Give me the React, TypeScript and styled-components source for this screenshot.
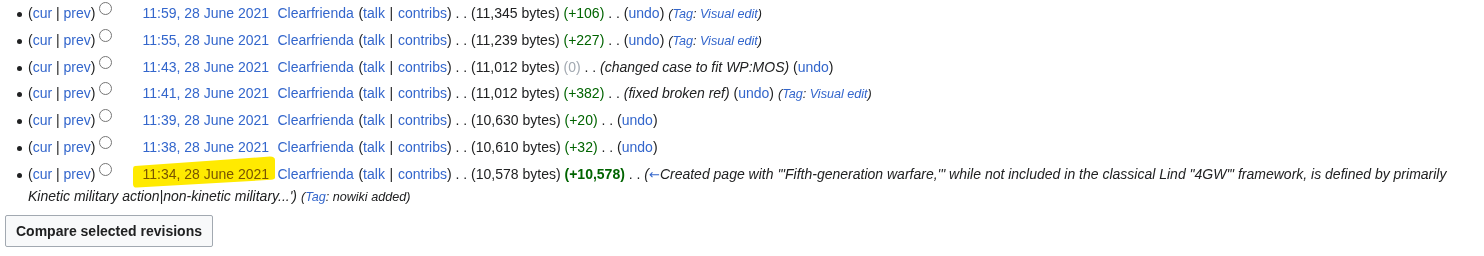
import React from "react";
import styled, { createGlobalStyle } from "styled-components";

const GlobalStyle = createGlobalStyle`
  body {
    margin: 0;
    background: #fff;
    color: #202122;
    font-family: "Liberation Sans", Arial, sans-serif;
  }
`;

const HistoryForm = styled.form`
  padding: 2px 14px 0 5px;
`;

const HistoryList = styled.ul`
  list-style: none;
  margin: 0 0 0 23px;
  padding: 0;
  font-size: 14px;
  line-height: 22px;
`;

const Entry = styled.li`
  position: relative;
  margin-bottom: 4.8px;

  &::before {
    content: "";
    position: absolute;
    left: -11px;
    top: 10px;
    width: 5px;
    height: 5px;
    border-radius: 50%;
    background: #202122;
  }
`;

const WikiLink = styled.a`
  color: #3366cc;
  text-decoration: none;
  cursor: pointer;
`;

const Arrow = styled(WikiLink)`
  font-family: "DejaVu Sans", sans-serif;
  font-style: normal;
  font-size: 13px;
  line-height: 1;
`;

const Radio = styled.input<{ $ghost?: boolean }>`
  appearance: none;
  box-sizing: border-box;
  display: inline-block;
  width: 13px;
  height: 13px;
  margin: 0 ${(p) => (p.$ghost ? "9.5px" : "0")} 0 ${(p) => (p.$ghost ? "7.5px" : "4px")};
  border: 1px solid #767676;
  border-radius: 50%;
  background: #fff;
  vertical-align: top;
  visibility: ${(p) => (p.$ghost ? "hidden" : "visible")};
`;

const Stamp = styled(WikiLink)<{ $visited?: boolean }>`
  margin-right: 4.5px;
  color: ${(p) => (p.$visited ? "#795cb2" : "#3366cc")};
`;

const UserTools = styled.span`
  word-spacing: 0.8px;
`;

const Marked = styled.span`
  position: relative;
`;

const Marker = styled.svg`
  position: absolute;
  left: -9.5px;
  top: -9.5px;
  width: 142px;
  height: 32px;
  pointer-events: none;
  mix-blend-mode: multiply;
`;

const Diff = styled.span<{ $tone: "pos" | "null"; $strong?: boolean }>`
  color: ${(p) => (p.$tone === "pos" ? "#006400" : "#a2a9b1")};
  font-weight: ${(p) => (p.$strong ? "bold" : "normal")};
`;

const Sep = styled.span`
  &::before {
    content: ". .";
  }
`;

const Comment = styled.span`
  font-style: italic;
`;

const Tags = styled.span`
  font-style: italic;
  font-size: 90%;
  line-height: 1;
`;

const CompareButton = styled.button`
  display: block;
  box-sizing: border-box;
  height: 32px;
  margin: 8.4px 0 0;
  padding: 0 10px;
  border: 1px solid #a2a9b1;
  border-radius: 2px;
  background: #f8f9fa;
  color: #202122;
  font-family: "Liberation Sans", Arial, sans-serif;
  font-size: 14px;
  font-weight: bold;
  cursor: pointer;
`;

type Rev = {
  time: string;
  size: string;
  diff: string;
  tone: "pos" | "null";
  big?: boolean;
  summary?: React.ReactNode;
  tag?: "ve" | "nowiki";
  marked?: boolean;
};

const revs: Rev[] = [
  { time: "11:59, 28 June 2021", size: "11,345", diff: "+106", tone: "pos", tag: "ve" },
  { time: "11:55, 28 June 2021", size: "11,239", diff: "+227", tone: "pos", tag: "ve" },
  { time: "11:43, 28 June 2021", size: "11,012", diff: "0", tone: "null", summary: "changed case to fit WP:MOS" },
  { time: "11:41, 28 June 2021", size: "11,012", diff: "+382", tone: "pos", summary: "fixed broken ref", tag: "ve" },
  { time: "11:39, 28 June 2021", size: "10,630", diff: "+20", tone: "pos" },
  { time: "11:38, 28 June 2021", size: "10,610", diff: "+32", tone: "pos" },
  {
    time: "11:34, 28 June 2021",
    size: "10,578",
    diff: "+10,578",
    tone: "pos",
    big: true,
    marked: true,
    tag: "nowiki",
    summary: (
      <>
        <Arrow>←</Arrow>Created page with '"Fifth-generation warfare,'" while not included in the classical
        Lind "4GW'" framework, is defined by primarily Kinetic military action|non-kinetic military...'
      </>
    ),
  },
];

// yellow marker stroke drawn over the selected timestamp
const HighlightMark = () => (
  <Marker viewBox="0 0 142 32" aria-hidden="true">
    <path
      d="M2,10 L137,0.5 Q142,0.5 142,4 L142,21.5 Q142,23.5 138,23.8 L4,31.6 Q0,31.8 0,28 L0,13 Q0,10.2 2,10 Z"
      fill="#ffea00"
    />
  </Marker>
);

const TagList = ({ kind }: { kind: "ve" | "nowiki" }) => (
  <Tags>
    (<WikiLink>Tag</WikiLink>: {kind === "ve" ? <WikiLink>Visual edit</WikiLink> : "nowiki added"})
  </Tags>
);

const RevisionRow = ({ rev }: { rev: Rev }) => {
  const stamp = <Stamp $visited={rev.marked}>{rev.time}</Stamp>;
  return (
    <Entry>
      (<WikiLink>cur</WikiLink> | <WikiLink>prev</WikiLink>)
      <Radio type="radio" readOnly />
      <Radio type="radio" $ghost readOnly />
      {rev.marked ? (
        <Marked>
          {stamp}
          <HighlightMark />
        </Marked>
      ) : (
        stamp
      )}{" "}
      <UserTools>
        <WikiLink>Clearfrienda</WikiLink> (<WikiLink>talk</WikiLink> | <WikiLink>contribs</WikiLink>)
      </UserTools>{" "}
      <Sep /> ({rev.size} bytes){" "}
      <Diff $tone={rev.tone} $strong={rev.big}>
        ({rev.diff})
      </Diff>{" "}
      <Sep />{" "}
      {rev.summary && !rev.big && (
        <>
          <Comment>({rev.summary})</Comment>{" "}
        </>
      )}
      {rev.big ? (
        <Comment>({rev.summary})</Comment>
      ) : (
        <>
          (<WikiLink>undo</WikiLink>)
        </>
      )}
      {rev.tag && (
        <>
          {" "}
          <TagList kind={rev.tag} />
        </>
      )}
    </Entry>
  );
};

const App = () => (
  <>
    <GlobalStyle />
    <HistoryForm onSubmit={(e) => e.preventDefault()}>
      <HistoryList>
        {revs.map((r) => (
          <RevisionRow key={r.time} rev={r} />
        ))}
      </HistoryList>
      <CompareButton type="submit">Compare selected revisions</CompareButton>
    </HistoryForm>
  </>
);

export default App;
